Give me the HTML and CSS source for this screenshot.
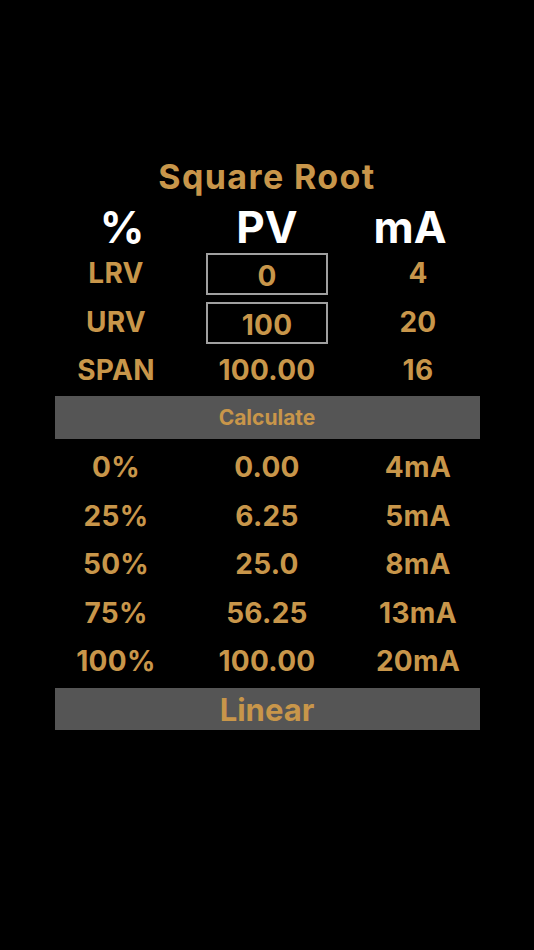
FILE: index.html
```html
<!DOCTYPE html>
<html lang="en">
<head>
<meta charset="utf-8">
<title>Square Root</title>
<link rel="stylesheet" href="styles.css">
</head>
<body>
<main class="calc">
  <h1 class="title">Square Root</h1>
  <div class="row head">
    <div class="cell pct">%</div>
    <div class="cell">PV</div>
    <div class="cell ma">mA</div>
  </div>
  <div class="row">
    <div class="cell">LRV</div>
    <div class="cell"><input class="field" type="text" value="0"></div>
    <div class="cell">4</div>
  </div>
  <div class="row">
    <div class="cell">URV</div>
    <div class="cell"><input class="field" type="text" value="100"></div>
    <div class="cell">20</div>
  </div>
  <div class="row">
    <div class="cell">SPAN</div>
    <div class="cell">100.00</div>
    <div class="cell">16</div>
  </div>
  <button class="bar calc-btn">Calculate</button>
  <div class="results">
    <div class="row"><div class="cell">0%</div><div class="cell">0.00</div><div class="cell">4mA</div></div>
    <div class="row"><div class="cell">25%</div><div class="cell">6.25</div><div class="cell">5mA</div></div>
    <div class="row"><div class="cell">50%</div><div class="cell">25.0</div><div class="cell">8mA</div></div>
    <div class="row"><div class="cell">75%</div><div class="cell">56.25</div><div class="cell">13mA</div></div>
    <div class="row"><div class="cell">100%</div><div class="cell">100.00</div><div class="cell">20mA</div></div>
  </div>
  <button class="bar mode-btn">Linear</button>
</main>
</body>
</html>
```
FILE: styles.css
```css
html, body {
  margin: 0;
  padding: 0;
  background: #000;
}
body {
  width: 534px;
  height: 950px;
  font-family: Inter, "Noto Sans", "Liberation Sans", sans-serif;
  color: #c8964a;
}
.calc {
  width: 453px;
  margin: 0 auto;
  padding-top: 152px;
  display: flex;
  flex-direction: column;
}
.title {
  margin: 0;
  height: 48px;
  display: flex;
  align-items: center;
  justify-content: center;
  font-size: 34px;
  font-weight: 700;
  letter-spacing: 1.4px;
}
.row {
  display: grid;
  grid-template-columns: repeat(3, 1fr);
  height: 48.5px;
  align-items: center;
  font-size: 28px;
  font-weight: 650;
  letter-spacing: 0.3px;
}
.cell {
  display: flex;
  justify-content: center;
  align-items: center;
}
.head {
  height: 49px;
  color: #fff;
  font-size: 44px;
  font-weight: 700;
  letter-spacing: 0;
}
.head .pct {
  padding-left: 12px;
}
.head .ma {
  padding-right: 16px;
}
.field {
  box-sizing: border-box;
  width: 122px;
  height: 42px;
  margin-top: 2px;
  background: #000;
  border: 2px solid #a0a0a0;
  color: #c8964a;
  font: 650 28px Inter, "Noto Sans", "Liberation Sans", sans-serif;
  letter-spacing: 0.3px;
  text-align: center;
  padding: 4px 0 0;
  outline: none;
}
.bar {
  margin: 0 14px;
  background: #555;
  border: 0;
  color: #c8964a;
  font-family: Inter, "Noto Sans", "Liberation Sans", sans-serif;
  font-weight: 700;
  padding: 0;
}
.calc-btn {
  margin-top: 1.5px;
  height: 43px;
  font-size: 21px;
}
.results {
  margin-top: 4px;
  display: flex;
  flex-direction: column;
}
.mode-btn {
  margin-top: 2.5px;
  height: 42px;
  font-size: 31px;
}
```
